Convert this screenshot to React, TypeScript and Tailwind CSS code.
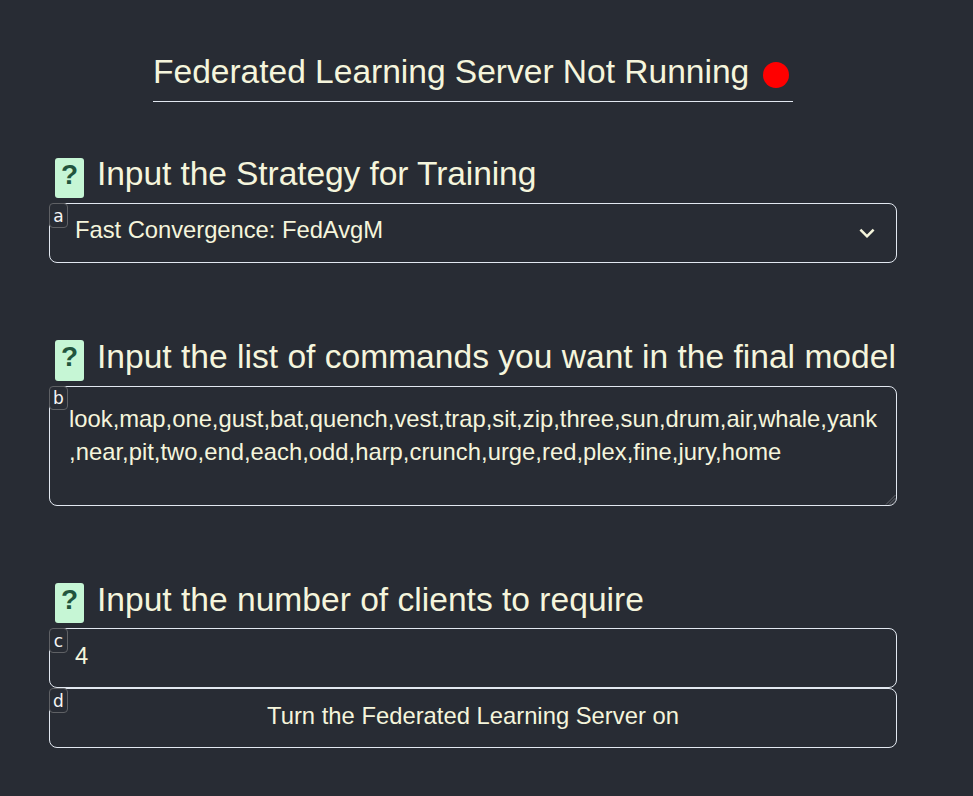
import React from "react";

function KeyHint({ label, short = false }: { label: string; short?: boolean }) {
  return (
    <span
      className={`absolute -left-px -top-px flex w-[19px] justify-center rounded-[4px] border border-[#5f6165] bg-[#282c34] font-['DejaVu_Sans',sans-serif] text-[17px] text-[#f5f5f5] ${short ? "h-6 leading-[23px]" : "h-[25px] leading-[25px]"}`}
    >
      {label}
    </span>
  );
}

function Heading({ text, raised = false, tight = false }: { text: string; raised?: boolean; tight?: boolean }) {
  return (
    <h2 className="flex h-[45px] items-start pl-[6px]">
      <span
        className={`flex w-[29px] shrink-0 justify-center rounded-[3px] bg-[#c6f6d5] text-[28px] font-bold leading-[34px] text-[#22543d] ${raised ? "-mt-px h-[41px]" : "h-10"}`}
      >
        ?
      </span>
      <span className={`ml-[13px] whitespace-nowrap text-[33.6px] ${tight ? "leading-[32px] tracking-[-0.1px]" : "leading-[34px]"} ${raised ? "-mt-px" : ""}`}>
        {text}
      </span>
    </h2>
  );
}

export default function App() {
  return (
    <main className="h-[796px] w-full overflow-hidden bg-[#282c34] pl-[49px] pt-[48px] font-['Liberation_Sans',sans-serif] text-[#f5f5dc]">
      <div className="w-[848px]">
        <header className="mx-auto flex h-[54px] w-[640px] border-b border-[#e2e8f0]">
          <h1 className="whitespace-nowrap text-[33.6px] leading-[48px] tracking-[-0.03px]">Federated Learning Server Not Running</h1>
          <span className="ml-auto mr-1 mt-[14px] size-[26px] shrink-0 rounded-full bg-[#ff0000]" />
        </header>
        <section className="mt-14">
          <Heading text="Input the Strategy for Training" tight />
          <div className="relative flex h-[60px] justify-between rounded-lg border border-[#e2e8f0] pl-[25px] text-[23.8px] leading-[52px] tracking-[-0.04px]">
            <KeyHint label="a" />
            Fast Convergence: FedAvgM
            <svg className="mr-[14px] mt-[14px] size-[30px]" viewBox="0 0 24 24" fill="currentColor">
              <path d="M16.59 8.59 12 13.17 7.41 8.59 6 10l6 6 6-6z" />
            </svg>
          </div>
        </section>
        <section className="mt-[78px]">
          <Heading text="Input the list of commands you want in the final model" raised />
          <div className="relative h-[120px] rounded-lg border border-[#e2e8f0] pl-[19px] pt-[15px] text-[23.8px] leading-[33px]">
            <KeyHint label="b" short />
            look,map,one,gust,bat,quench,vest,trap,sit,zip,three,sun,drum,air,whale,yank
            <br />
            <span className="tracking-[0.015px]">,near,pit,two,end,each,odd,harp,crunch,urge,red,plex,fine,jury,home</span>
            <svg className="absolute bottom-0 right-0 size-[11px]" viewBox="0 0 11 11" fill="none" stroke="#77797d" strokeWidth="0.8">
              <path d="M1 10.5 10.5 1M4 10.5 10.5 4M7 10.5 10.5 7" />
            </svg>
          </div>
        </section>
        <section className="mt-[77px]">
          <Heading text="Input the number of clients to require" />
          <div className="relative h-[60px] rounded-lg border border-[#e2e8f0] pl-[25px] text-[23.8px] leading-[54px]">
            <KeyHint label="c" />4
          </div>
          <button className="relative block h-[60px] w-full rounded-lg border border-[#e2e8f0] pb-1 text-[23.8px] leading-[52px]">
            <KeyHint label="d" />
            Turn the Federated Learning Server on
          </button>
        </section>
      </div>
    </main>
  );
}
